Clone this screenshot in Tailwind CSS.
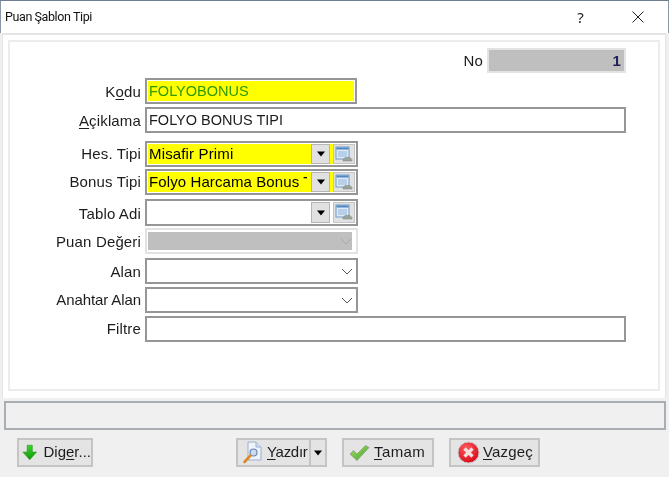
<!DOCTYPE html>
<html lang="en">
<head>
  <meta charset="UTF-8" />
  <title>Puan Şablon Tipi</title>
  <script src="https://cdn.jsdelivr.net/npm/@tailwindcss/browser@4"></script>
</head>
<body class="bg-[#f0f0f0]">
  <div class="w-[669px] h-[477px] flex flex-col overflow-hidden bg-[#f0f0f0] border-t border-[#6f7f92] font-['Liberation_Sans',sans-serif] text-[15px] tracking-[0.15px] text-[#1c1c1c] blur-[0.35px]">
    <!-- title bar -->
    <div class="h-[32px] shrink-0 bg-white flex items-center border-l border-r border-[#8a97a6]">
      <span class="ml-[4px] font-['Roboto',sans-serif] text-[12.5px] tracking-[-0.4px] text-[#111]">Puan Şablon Tipi</span>
      <span class="ml-auto mr-[48px] font-['Noto_Sans',sans-serif] text-[15px] text-[#222]">?</span>
      <svg class="mr-[24px]" width="12" height="12" viewBox="0 0 12 12"><path d="M0.5 0.5L11.5 11.5M11.5 0.5L0.5 11.5" stroke="#222" stroke-width="1" fill="none" /></svg>
    </div>

    <!-- form area -->
    <div class="h-[365px] shrink-0 ml-[2px] mr-[3px] border-t-2 border-[#e4e4e4] border-l border-r bg-white p-[5px] pb-[7px]">
      <div class="h-full border-2 border-[#ececec] relative">
        <div class="pl-[131px] pt-[6px] flex flex-col">
          <!-- No -->
          <div class="flex items-center justify-end h-[25px] pr-[32px]">
            <span class="mr-[4px] pt-[2px]">No</span>
            <div class="w-[139px] h-[25px] border-2 border-[#e3e3e3] bg-[#bfbfbf] text-right pr-[3px] leading-[21px] font-bold text-[#22225a]">1</div>
          </div>
          <!-- Kodu -->
          <div class="flex items-center h-[26px] mt-[5px]">
            <span class="w-[0] flex justify-end whitespace-nowrap mr-[4px] pt-[2px]">K<u class="underline-offset-2">o</u>du</span>
            <div class="w-[212px] h-[26px] border-2 border-[#969696] bg-white p-[1px]"><div class="h-full bg-[#ffff00] text-[#2f9a00] text-[14.5px] tracking-normal leading-[21px] pl-[1px]">FOLYOBONUS</div></div>
          </div>
          <!-- Aciklama -->
          <div class="flex items-center h-[26px] mt-[3px]">
            <span class="w-[0] flex justify-end whitespace-nowrap mr-[4px] pt-[2px]"><u class="underline-offset-2">A</u>çiklama</span>
            <div class="w-[481px] h-[26px] border-2 border-[#969696] bg-white text-[14.5px] tracking-normal leading-[20px] pl-[2px] pt-[1px]">FOLYO BONUS TIPI</div>
          </div>
          <!-- Hes. Tipi -->
          <div class="flex items-center h-[26px] mt-[8px]">
            <span class="w-[0] flex justify-end whitespace-nowrap mr-[4px]">Hes. Tipi</span>
            <div class="w-[213px] h-[26px] border-2 border-[#969696] bg-white py-[1px] pl-[1px] pr-[1px] flex">
              <div class="flex-1 min-w-0 overflow-hidden whitespace-nowrap bg-[#ffff00] leading-[20px] pl-[1px] text-black">Misafir Primi</div>
              <div class="w-[19px] bg-[#e1e1e1] border border-[#b5b5b5] flex items-center justify-center"><svg width="10" height="6" viewBox="0 0 10 6"><path d="M1 0.5H9L5 5.5Z" fill="#000" /></svg></div>
              <div class="w-[3px] bg-[#ffff00]"></div>
              <div class="w-[22px] bg-[#e1e1e1] border border-[#c4c4c4] flex items-center justify-center"><svg width="18" height="17" viewBox="0 0 18 17"><rect x="1" y="1" width="13" height="12" fill="#dfeaf6" stroke="#6f9cc9" /><path d="M1.5 2.5H13.5" stroke="#4f86c0" stroke-width="2" /><path d="M3 6H12M3 8H12M3 10H12" stroke="#8fb4d8" /><path d="M8 13.5L10 11.5H15L17 13.5V15H8Z" fill="#9aa39a" stroke="#7d877d" stroke-width="0.5" /></svg></div>
            </div>
          </div>
          <!-- Bonus Tipi -->
          <div class="flex items-center h-[26px] mt-[2px]">
            <span class="w-[0] flex justify-end whitespace-nowrap mr-[4px]">Bonus Tipi</span>
            <div class="w-[213px] h-[26px] border-2 border-[#969696] bg-white py-[1px] pl-[1px] pr-[1px] flex">
              <div class="flex-1 min-w-0 bg-[#ffff00] leading-[20px] pl-[1px] text-black"><div class="w-[158px] overflow-hidden whitespace-nowrap tracking-[0.1px]">Folyo Harcama Bonus Tipi</div></div>
              <div class="w-[19px] bg-[#e1e1e1] border border-[#b5b5b5] flex items-center justify-center"><svg width="10" height="6" viewBox="0 0 10 6"><path d="M1 0.5H9L5 5.5Z" fill="#000" /></svg></div>
              <div class="w-[3px] bg-[#ffff00]"></div>
              <div class="w-[22px] bg-[#e1e1e1] border border-[#c4c4c4] flex items-center justify-center"><svg width="18" height="17" viewBox="0 0 18 17"><rect x="1" y="1" width="13" height="12" fill="#dfeaf6" stroke="#6f9cc9" /><path d="M1.5 2.5H13.5" stroke="#4f86c0" stroke-width="2" /><path d="M3 6H12M3 8H12M3 10H12" stroke="#8fb4d8" /><path d="M8 13.5L10 11.5H15L17 13.5V15H8Z" fill="#9aa39a" stroke="#7d877d" stroke-width="0.5" /></svg></div>
            </div>
          </div>
          <!-- Tablo Adi -->
          <div class="flex items-center h-[27px] mt-[4px]">
            <span class="w-[0] flex justify-end whitespace-nowrap mr-[4px] pt-[3px]">Tablo Adi</span>
            <div class="w-[213px] h-[27px] border-2 border-[#969696] bg-white py-[1px] pl-[1px] pr-[1px] flex">
              <div class="flex-1 min-w-0"></div>
              <div class="w-[19px] bg-[#e1e1e1] border border-[#b5b5b5] flex items-center justify-center"><svg width="10" height="6" viewBox="0 0 10 6"><path d="M1 0.5H9L5 5.5Z" fill="#000" /></svg></div>
              <div class="w-[3px]"></div>
              <div class="w-[22px] bg-[#e1e1e1] border border-[#c4c4c4] flex items-center justify-center"><svg width="18" height="17" viewBox="0 0 18 17"><rect x="1" y="1" width="13" height="12" fill="#dfeaf6" stroke="#6f9cc9" /><path d="M1.5 2.5H13.5" stroke="#4f86c0" stroke-width="2" /><path d="M3 6H12M3 8H12M3 10H12" stroke="#8fb4d8" /><path d="M8 13.5L10 11.5H15L17 13.5V15H8Z" fill="#9aa39a" stroke="#7d877d" stroke-width="0.5" /></svg></div>
            </div>
          </div>
          <!-- Puan Degeri -->
          <div class="flex items-center h-[26px] mt-[2px]">
            <span class="w-[0] flex justify-end whitespace-nowrap mr-[4px] pt-[2px]">Puan Değeri</span>
            <div class="w-[213px] h-[26px] border-2 border-[#e3e3e3] bg-white py-[2px] pl-[1px] pr-[4px]">
              <div class="h-full bg-[#bfbfbf] flex items-center justify-end pr-[0px]"><svg width="12" height="7" viewBox="0 0 12 7"><path d="M1 1L6 6L11 1" stroke="#a8a8a8" fill="none" /></svg></div>
            </div>
          </div>
          <!-- Alan -->
          <div class="flex items-center h-[26px] mt-[4px]">
            <span class="w-[0] flex justify-end whitespace-nowrap mr-[4px] pt-[3px]">Alan</span>
            <div class="w-[213px] h-[26px] border-2 border-[#969696] bg-white flex items-center justify-end pr-[3px]"><svg width="12" height="7" viewBox="0 0 12 7"><path d="M1 1L6 6L11 1" stroke="#555" fill="none" /></svg></div>
          </div>
          <!-- Anahtar Alan -->
          <div class="flex items-center h-[26px] mt-[3px]">
            <span class="w-[0] flex justify-end whitespace-nowrap mr-[4px] tracking-[-0.1px]">Anahtar Alan</span>
            <div class="w-[213px] h-[26px] border-2 border-[#969696] bg-white flex items-center justify-end pr-[3px]"><svg width="12" height="7" viewBox="0 0 12 7"><path d="M1 1L6 6L11 1" stroke="#555" fill="none" /></svg></div>
          </div>
          <!-- Filtre -->
          <div class="flex items-center h-[26px] mt-[3px]">
            <span class="w-[0] flex justify-end whitespace-nowrap mr-[4px]">Filtre</span>
            <div class="w-[481px] h-[26px] border-2 border-[#969696] bg-white"></div>
          </div>
        </div>
      </div>
    </div>

    <!-- status panel -->
    <div class="h-[29px] shrink-0 ml-[4px] mr-[3px] mt-[3px] border-2 border-[#a9aeb5] bg-[#f0f0f0]"></div>

    <!-- button bar -->
    <div class="flex items-start mt-[8px] pl-[17px]">
      <div class="w-[76px] h-[29px] border-2 border-[#c4c4c4] bg-[#e4e4e4] flex items-center pl-[3px]">
        <svg width="18" height="19" viewBox="0 0 18 19">
          <defs><linearGradient id="grn" x1="0" y1="0" x2="0" y2="1"><stop offset="0" stop-color="#3fd42c" /><stop offset="1" stop-color="#0c9a08" /></linearGradient></defs>
          <path d="M6 1H12V9H17L9 18L1 9H6Z" fill="url(#grn)" stroke="#1b8f12" stroke-width="0.6" />
        </svg>
        <span class="ml-[6px] whitespace-nowrap tracking-normal">Dig<u class="underline-offset-2">e</u>r...</span>
      </div>
      <div class="flex ml-[143px]">
        <div class="w-[75px] h-[29px] border-2 border-[#c4c4c4] bg-[#e4e4e4] flex items-center pl-[4px]">
          <svg width="20" height="23" viewBox="0 0 20 23">
            <path d="M6 1H14L19 6V19H6Z" fill="#eef3fb" stroke="#9db0cf" />
            <path d="M14 1V6H19" fill="#cfdcf0" stroke="#9db0cf" />
            <circle cx="11.5" cy="11.5" r="3.5" fill="#c9dcf2" stroke="#6f86ad" stroke-width="1.2" />
            <path d="M8.5 14.5L2.5 21" stroke="#d98a2b" stroke-width="2.6" stroke-linecap="round" />
          </svg>
          <span class="ml-[5px] tracking-[-0.3px]"><u class="underline-offset-2">Y</u>azdır</span>
        </div>
        <div class="w-[16px] h-[29px] border-2 border-l-0 border-[#c4c4c4] bg-[#e4e4e4] flex items-center justify-center"><svg width="10" height="6" viewBox="0 0 10 6"><path d="M1 0.5H9L5 5.5Z" fill="#000" /></svg></div>
      </div>
      <div class="w-[92px] h-[29px] ml-[15px] border-2 border-[#c4c4c4] bg-[#e4e4e4] flex items-center pl-[5px]">
        <svg width="21" height="18" viewBox="0 0 21 18">
          <defs><linearGradient id="chk" x1="0" y1="0" x2="1" y2="1"><stop offset="0" stop-color="#a8e070" /><stop offset="1" stop-color="#3fa51c" /></linearGradient></defs>
          <path d="M1 10L4.5 6.5L8 10L16.5 1.5L20 3.5L8 16.5Z" fill="url(#chk)" stroke="#8b9c80" stroke-width="0.8" stroke-linejoin="round" />
        </svg>
        <span class="ml-[4px] tracking-[0.4px]"><u class="underline-offset-2">T</u>amam</span>
      </div>
      <div class="w-[91px] h-[29px] ml-[15px] border-2 border-[#c4c4c4] bg-[#e4e4e4] flex items-center pl-[6px]">
        <svg width="23" height="23" viewBox="0 0 23 23">
          <defs><radialGradient id="red" cx="0.4" cy="0.3" r="0.8"><stop offset="0" stop-color="#ff5a5f" /><stop offset="1" stop-color="#d3000f" /></radialGradient></defs>
          <circle cx="11.5" cy="11.5" r="10.5" fill="url(#red)" stroke="#c8c8c8" />
          <path d="M7.5 7.5L15.5 15.5M15.5 7.5L7.5 15.5" stroke="#f6dede" stroke-width="3.2" />
        </svg>
        <span class="ml-[3px]"><u class="underline-offset-2">V</u>azgeç</span>
      </div>
    </div>
  </div>
</body>
</html>
